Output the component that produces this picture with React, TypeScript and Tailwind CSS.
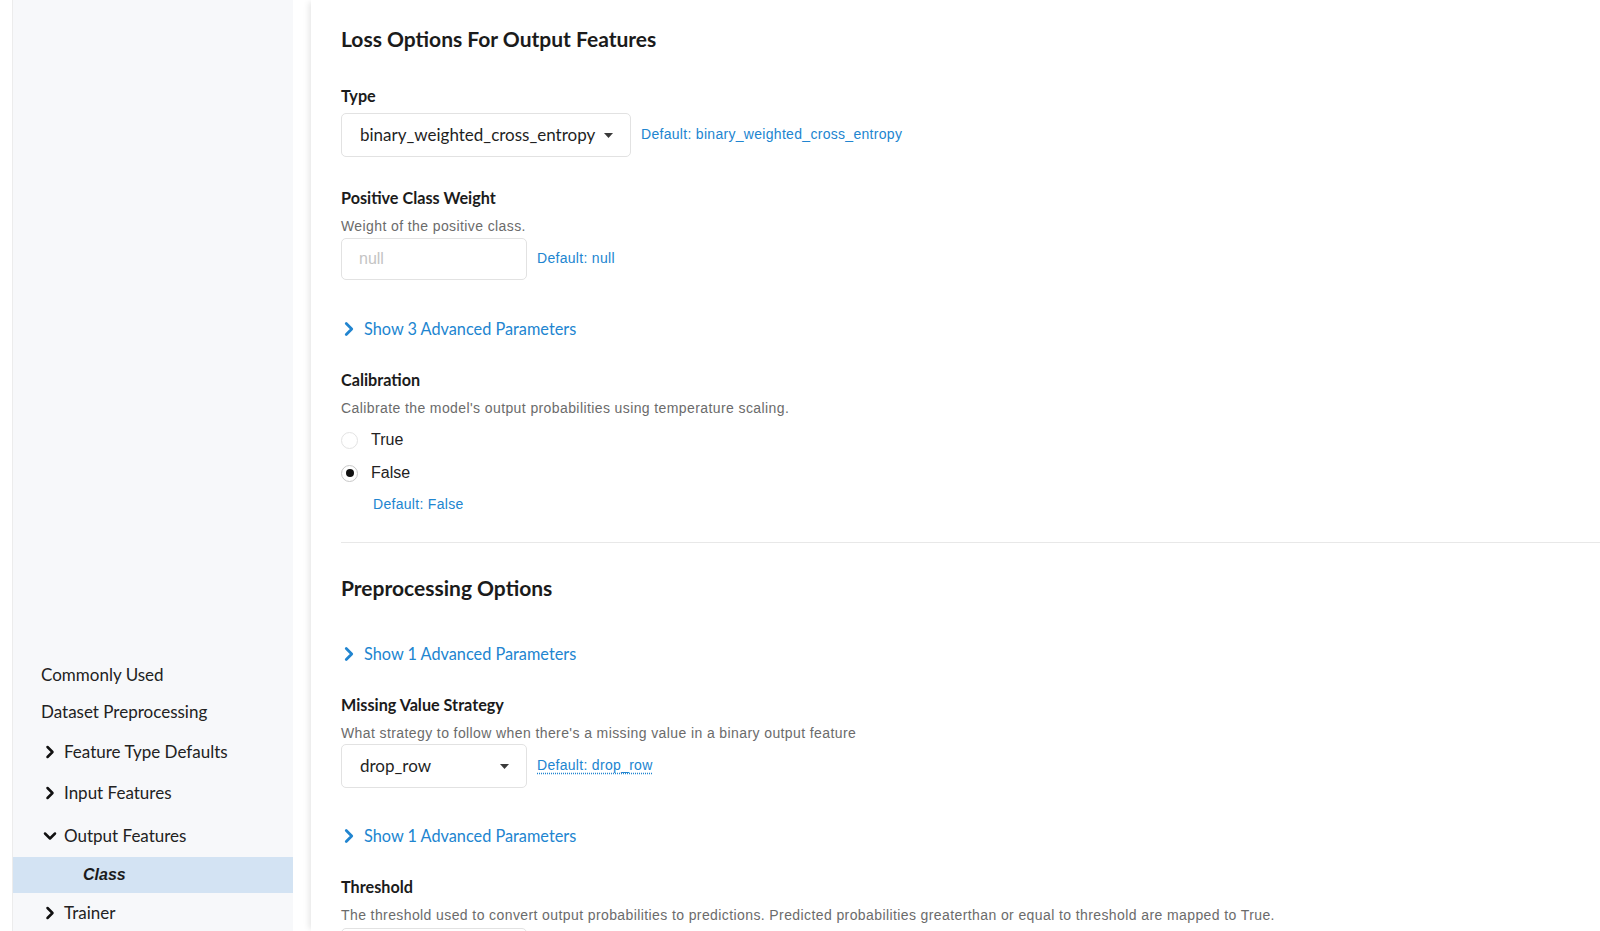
import React from "react";
import { ChevronRight, ChevronDown } from "lucide-react";

const lato = "font-['Lato','Noto_Sans',sans-serif]";
const arial = "font-['Liberation_Sans','Arial',sans-serif]";

function Caret() {
  return (
    <svg width="9" height="5" viewBox="0 0 9 5" className="shrink-0">
      <path d="M0 0 L9 0 L4.5 5 Z" fill="#3a3a3a" />
    </svg>
  );
}

function SideItem({
  label,
  h,
  chevron,
  open,
}: {
  label: string;
  h: string;
  chevron?: boolean;
  open?: boolean;
}) {
  return (
    <div className={`flex shrink-0 items-center ${h} ${chevron ? "pl-[27px]" : "pl-[28px]"}`}>
      {chevron &&
        (open ? (
          <ChevronDown size={20} strokeWidth={3} className="mr-[4px] text-[#111]" />
        ) : (
          <ChevronRight size={20} strokeWidth={3} className="mr-[4px] text-[#111]" />
        ))}
      <span className="text-[17px] text-[#222]">{label}</span>
    </div>
  );
}

function Label({ children, className = "" }: { children: React.ReactNode; className?: string }) {
  return (
    <div className={`${lato} text-[16.2px] font-bold leading-[22px] text-[#1b1b1b] ${className}`}>
      {children}
    </div>
  );
}

function Desc({ children, className = "" }: { children: React.ReactNode; className?: string }) {
  return (
    <div className={`${arial} text-[14px] leading-[18px] tracking-[0.4px] text-[#6b6b6b] ${className}`}>
      {children}
    </div>
  );
}

function DefaultText({ children, dotted }: { children: React.ReactNode; dotted?: boolean }) {
  return (
    <span
      className={`${arial} text-[14px] leading-[18px] tracking-[0.3px] text-[#2185d0] ${
        dotted ? "underline decoration-dotted decoration-[#2185d0] underline-offset-[3px]" : ""
      }`}
    >
      {children}
    </span>
  );
}

function Advanced({ n, className = "" }: { n: number; className?: string }) {
  return (
    <div className={`flex h-[22px] items-center ${className}`}>
      <ChevronRight size={22} strokeWidth={3} className="-ml-[3px] mr-[4px] text-[#2185d0]" />
      <span className={`${lato} text-[16.3px] text-[#2185d0]`}>Show {n} Advanced Parameters</span>
    </div>
  );
}

function Radio({ checked, label, className = "" }: { checked?: boolean; label: string; className?: string }) {
  return (
    <div className={`flex h-[22px] items-center ${className}`}>
      <div
        className={`flex h-[17px] w-[17px] items-center justify-center rounded-full border ${
          checked ? "border-[#c8c8c8]" : "border-[#e3e3e3]"
        } bg-white`}
      >
        {checked && <div className="h-[8px] w-[8px] rounded-full bg-[#111]" />}
      </div>
      <span className={`${arial} ml-[13px] text-[16px] text-[#222]`}>{label}</span>
    </div>
  );
}

export default function App() {
  return (
    <div className={`flex h-[931px] w-[1600px] overflow-hidden bg-white ${lato}`}>
      <div className="w-[12px] shrink-0 bg-white" />
      <aside className="flex h-full w-[281px] shrink-0 flex-col overflow-hidden border-l border-[#ececec] bg-[#f7f8fa] pt-[656px]">
        <SideItem label="Commonly Used" h="h-[37px]" />
        <SideItem label="Dataset Preprocessing" h="h-[38px]" />
        <SideItem label="Feature Type Defaults" h="h-[41px]" chevron />
        <SideItem label="Input Features" h="h-[42px]" chevron />
        <SideItem label="Output Features" h="h-[43px]" chevron open />
        <div className="flex h-[36px] shrink-0 items-center bg-[#d3e3f3] pl-[70px]">
          <span className={`${arial} text-[16px] font-bold italic text-[#1b1b1b]`}>Class</span>
        </div>
        <SideItem label="Trainer" h="h-[40px]" chevron />
      </aside>
      <div className="w-[18px] shrink-0 bg-white" />
      <main className="h-full flex-1 bg-white pl-[30px] pt-[25px] shadow-[-4px_0_6px_-2px_rgba(0,0,0,0.10)]">
        <h2 className={`${lato} text-[21px] font-bold leading-[28px] text-[#1b1b1b]`}>
          Loss Options For Output Features
        </h2>

        <Label className="mt-[32px]">Type</Label>
        <div className="mt-[6px] flex items-center">
          <div className="flex h-[44px] w-[290px] items-center justify-between rounded-[5px] border border-[#e2e2e2] bg-white pl-[18px] pr-[17px]">
            <span className={`${lato} text-[17px] text-[#1f1f1f]`}>binary_weighted_cross_entropy</span>
            <Caret />
          </div>
          <div className="ml-[10px] flex -translate-y-[1px] items-center">
            <DefaultText>Default: binary_weighted_cross_entropy</DefaultText>
          </div>
        </div>

        <Label className="mt-[30px]">Positive Class Weight</Label>
        <Desc className="mt-[8px]">Weight of the positive class.</Desc>
        <div className="mt-[3px] flex items-center">
          <div className="flex h-[42px] w-[186px] items-center rounded-[5px] border border-[#e2e2e2] bg-white pl-[17px]">
            <span className={`${arial} text-[16px] text-[#c4c4c4]`}>null</span>
          </div>
          <div className="ml-[10px] flex -translate-y-[1px] items-center">
            <DefaultText>Default: null</DefaultText>
          </div>
        </div>

        <Advanced n={3} className="mt-[38px]" />

        <Label className="mt-[29px]">Calibration</Label>
        <Desc className="mt-[8px]">Calibrate the model's output probabilities using temperature scaling.</Desc>
        <Radio label="True" className="mt-[12px]" />
        <Radio label="False" checked className="mt-[11px]" />
        <div className="mt-[11px] flex h-[18px] items-center pl-[32px]">
          <DefaultText>Default: False</DefaultText>
        </div>

        <div className="mt-[29px] h-px bg-[#e8e8e8]" />

        <h2 className={`${lato} mt-[31px] text-[21px] font-bold leading-[28px] text-[#1b1b1b]`}>
          Preprocessing Options
        </h2>

        <Advanced n={1} className="mt-[41px]" />

        <Label className="mt-[29px]">Missing Value Strategy</Label>
        <Desc className="mt-[8px]">
          What strategy to follow when there's a missing value in a binary output feature
        </Desc>
        <div className="mt-[2px] flex items-center">
          <div className="flex h-[44px] w-[186px] items-center justify-between rounded-[5px] border border-[#e2e2e2] bg-white pl-[18px] pr-[17px]">
            <span className={`${lato} text-[17px] text-[#1f1f1f]`}>drop_row</span>
            <Caret />
          </div>
          <div className="ml-[10px] flex -translate-y-[1px] items-center">
            <DefaultText dotted>Default: drop_row</DefaultText>
          </div>
        </div>

        <Advanced n={1} className="mt-[37px]" />

        <Label className="mt-[29px]">Threshold</Label>
        <Desc className="mt-[8px]">
          The threshold used to convert output probabilities to predictions. Predicted probabilities
          greaterthan or equal to threshold are mapped to True.
        </Desc>
        <div className="mt-[4px] h-[42px] w-[186px] rounded-[5px] border border-[#e2e2e2] bg-white" />
      </main>
    </div>
  );
}
